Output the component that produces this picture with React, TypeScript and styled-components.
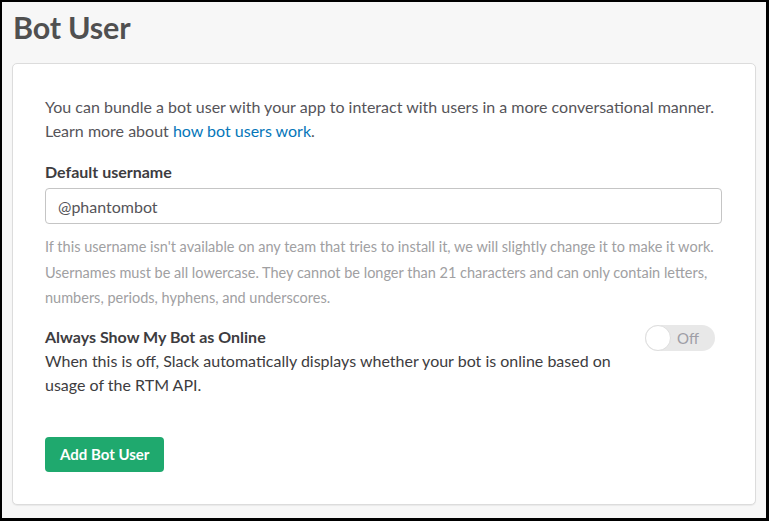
import React from "react";
import styled, { createGlobalStyle } from "styled-components";

const GlobalStyle = createGlobalStyle`
  html, body { margin: 0; padding: 0; }
  body { font-family: Lato, "Open Sans", sans-serif; -webkit-font-smoothing: antialiased; }
  * { box-sizing: border-box; }
`;

const Frame = styled.div`
  width: 769px;
  height: 521px;
  border: 2px solid #000;
  border-right-width: 3px;
  border-bottom-width: 3px;
  background: #f7f7f7;
  padding: 0 10px;
  overflow: hidden;
`;

const Title = styled.h1`
  margin: 7px 0 18px 1px;
  font-size: 30.5px;
  line-height: 36px;
  font-weight: 700;
  color: #505050;
  letter-spacing: -0.2px;
`;

const Card = styled.section`
  background: #fff;
  border: 1px solid #dcdcdc;
  border-radius: 5px;
  box-shadow: 0 1px 1px rgba(0, 0, 0, 0.06);
  padding: 31px 33px 32px 32px;
  color: #555459;
  font-size: 16px;
  line-height: 24px;
`;

const Intro = styled.p`
  margin: 0 0 17px;
`;

const Link = styled.a`
  color: #0576b9;
  text-decoration: none;
`;

const Label = styled.label`
  display: block;
  font-weight: 700;
  color: #3d3c40;
  margin-bottom: 4px;
`;

const Input = styled.input`
  display: block;
  width: 100%;
  height: 36px;
  border: 1px solid #c5c5c5;
  border-radius: 4px;
  padding: 0 12px;
  font-family: inherit;
  font-size: 16px;
  color: #555459;
  outline: none;
  &::placeholder { color: #555459; }
`;

const Help = styled.p`
  margin: 10px 0 14px;
  font-size: 14.5px;
  line-height: 25.5px;
  color: #a0a0a2;
`;

const SettingRow = styled.div`
  display: flex;
  justify-content: space-between;
  align-items: flex-start;
  padding-right: 7px;
`;

const SettingText = styled.div`
  width: 600px;
`;

const SettingTitle = styled.div`
  font-weight: 700;
  color: #3d3c40;
`;

const SettingDesc = styled.div`
  color: #3d3c40;
`;

const Toggle = styled.div`
  position: relative;
  width: 70px;
  height: 26px;
  border-radius: 13px;
  background: #e8e8e8;
  display: flex;
  align-items: center;
  justify-content: flex-end;
  padding-right: 16px;
  font-size: 15px;
  color: #9e9ea6;
  flex-shrink: 0;
`;

const Knob = styled.span`
  position: absolute;
  left: 0;
  top: 0;
  width: 26px;
  height: 26px;
  border-radius: 50%;
  background: #fff;
  border: 1px solid #dedede;
`;

const Button = styled.button`
  margin-top: 40px;
  height: 35px;
  padding: 0 15px;
  border: none;
  border-radius: 4px;
  background: #1fa96e;
  color: #fff;
  font-family: inherit;
  font-weight: 700;
  font-size: 15px;
  cursor: pointer;
`;

export default function App() {
  return (
    <>
      <GlobalStyle />
      <Frame>
        <Title>Bot User</Title>
        <Card>
          <Intro>
            You can bundle a bot user with your app to interact with users in a more conversational manner.
            Learn more about <Link href="#">how bot users work</Link>.
          </Intro>
          <Label htmlFor="username">Default username</Label>
          <Input id="username" placeholder="@phantombot" />
          <Help>
            If this username isn't available on any team that tries to install it, we will slightly change it to make it work.
            Usernames must be all lowercase. They cannot be longer than 21 characters and can only contain letters,
            numbers, periods, hyphens, and underscores.
          </Help>
          <SettingRow>
            <SettingText>
              <SettingTitle>Always Show My Bot as Online</SettingTitle>
              <SettingDesc>
                When this is off, Slack automatically displays whether your bot is online based on usage of the RTM API.
              </SettingDesc>
            </SettingText>
            <Toggle>
              <Knob />
              Off
            </Toggle>
          </SettingRow>
          <Button>Add Bot User</Button>
        </Card>
      </Frame>
    </>
  );
}
